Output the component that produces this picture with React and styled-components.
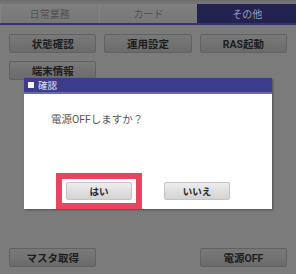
import styled, { createGlobalStyle } from 'styled-components';

const Global = createGlobalStyle`
  html, body {
    margin: 0;
    padding: 0;
    background: #7b7b7b;
  }
  body {
    font-family: Roboto, "Noto Sans CJK JP", sans-serif;
  }
`

const Screen = styled.div`
  position: relative;
  width: 296px;
  height: 274px;
  background: #7b7b7b;
  overflow: hidden;
  display: flex;
  flex-direction: column;
`

const TabBar = styled.div`
  display: flex;
  height: 25px;
  padding-top: 3px;
  box-sizing: border-box;
  background: #747474;
  border-top: 1px solid #6c6c6c;
  border-bottom: 2px solid #37366c;
`

const Tab = styled.div`
  flex: 1;
  display: flex;
  align-items: center;
  justify-content: center;
  font-size: 10px;
  color: ${p => (p.$active ? '#9d9cb8' : '#515151')};
  background: ${p => (p.$active ? '#242350' : 'linear-gradient(#7f7f7f, #777777)')};
  border-left: 1px solid ${p => (p.$active ? '#242350' : '#858585')};
`

const Grid = styled.div`
  display: grid;
  grid-template-columns: repeat(3, 1fr);
  gap: 8px 8px;
  padding: 9px 9px 0;
`

const Footer = styled.div`
  margin-top: auto;
  display: grid;
  grid-template-columns: repeat(3, 1fr);
  gap: 8px;
  padding: 0 9px 7px;
`

const Button = styled.div`
  grid-column: ${p => p.$col || 'auto'};
  height: 19px;
  box-sizing: border-box;
  display: flex;
  align-items: center;
  justify-content: center;
  font-size: 10.5px;
  font-weight: bold;
  color: #1e1e1e;
  background: linear-gradient(#797979, #6b6b6b);
  border: 1px solid #626262;
  border-radius: 2px;
`

const Dialog = styled.div`
  position: absolute;
  left: 24px;
  top: 78px;
  width: 248px;
  height: 131px;
  background: #ffffff;
  box-shadow: 1px 1px 2px rgba(0, 0, 0, 0.35);
  display: flex;
  flex-direction: column;
`

const TitleBar = styled.div`
  height: 14px;
  background: #3d3b8c;
  border-bottom: 2px solid #6a68b0;
  display: flex;
  align-items: center;
  gap: 4px;
  padding-left: 4px;
  color: #e6e6f4;
  font-size: 9.5px;
`

const TitleIcon = styled.span`
  width: 6px;
  height: 6px;
  background: #f4f4f8;
`

const Message = styled.div`
  padding: 17px 0 0 27px;
  height: 70px;
  box-sizing: border-box;
  font-size: 10.5px;
  color: #555555;
`

const Actions = styled.div`
  display: flex;
  justify-content: center;
  gap: 32px;
  padding-top: 18px;
`

const DialogButton = styled.div`
  position: relative;
  width: 66px;
  height: 18px;
  box-sizing: border-box;
  display: flex;
  align-items: center;
  justify-content: center;
  font-size: 9.5px;
  font-weight: bold;
  color: #2a2a2a;
  background: linear-gradient(#ededed, #d3d3d3);
  border: 1px solid #c4c4c4;
  border-radius: 2px;
`

const Highlight = styled.div`
  position: absolute;
  left: -11px;
  top: -10px;
  width: 86px;
  height: 36px;
  box-sizing: border-box;
  border: 6px solid #e9445f;
`

export default function App() {
  return (
    <Screen>
      <Global />
      <TabBar>
        <Tab>日常業務</Tab>
        <Tab>カード</Tab>
        <Tab $active>その他</Tab>
      </TabBar>
      <Grid>
        <Button>状態確認</Button>
        <Button>運用設定</Button>
        <Button>RAS起動</Button>
        <Button>端末情報</Button>
      </Grid>
      <Footer>
        <Button>マスタ取得</Button>
        <Button $col={3}>電源OFF</Button>
      </Footer>
      <Dialog>
        <TitleBar>
          <TitleIcon />
          確認
        </TitleBar>
        <Message>電源OFFしますか？</Message>
        <Actions>
          <DialogButton>
            <Highlight />
            はい
          </DialogButton>
          <DialogButton>いいえ</DialogButton>
        </Actions>
      </Dialog>
    </Screen>
  );
}
